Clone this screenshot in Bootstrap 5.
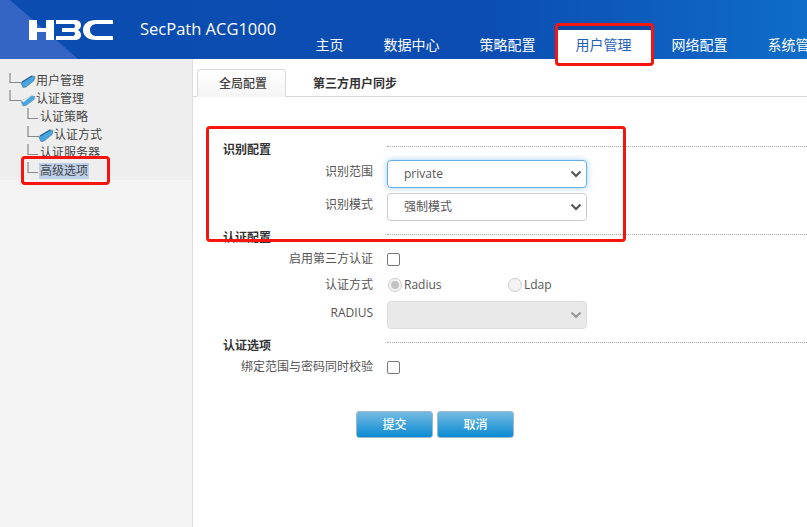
<!DOCTYPE html>
<html lang="zh">
<head>
<meta charset="utf-8">
<title>SecPath ACG1000</title>
<link href="https://cdn.jsdelivr.net/npm/bootstrap@5.3.0/dist/css/bootstrap.min.css" rel="stylesheet">
<style>
html,body{height:100%;overflow:hidden}
body{font-family:"Open Sans","Noto Sans CJK SC",sans-serif;font-size:12px;color:#444;background:#fff;position:relative}
.hdr{height:59px;background:linear-gradient(90deg,#0b4cb0 0%,#0b4db2 60%,#0f6cc8 100%);position:relative;overflow:hidden}
.hdr-tri{position:absolute;left:0;top:0}
.brand-wrap{position:relative;width:295.5px;flex:none;height:59px}
.h3c{position:absolute;left:28px;top:19px}
.prod{position:absolute;left:140px;top:17px;color:#fff;font-size:16.5px;line-height:24px;white-space:nowrap}
.topnav{flex-wrap:nowrap;height:59px;align-items:flex-end;position:relative}
.topnav .nav-link{color:#fff;font-size:14px;line-height:20px;padding:5px 20px 4px;white-space:nowrap;height:29px;border-radius:0}
.topnav .nav-link.active{background:#fff;color:#1f5fb8;border-top:4px solid #0d49a6;height:33px}
.sidebar{width:193px;flex:none;background:#f4f4f4;border-right:1px solid #dcdcdc;height:468px}
.tree-wrap{background:#eee;padding-top:13px;height:121px}
.tr-row{height:18px;display:flex;align-items:center;color:#444;font-size:12px;line-height:18px;white-space:nowrap}
.tr-row svg{flex:none}
.sel-item{background:#bdd0ea;padding:0 1px;line-height:16px}
.main-pane{flex:1;min-width:0}
.tabbar{height:38px;border-bottom:1px solid #d9d9d9;padding:10px 0 0 4px;flex-wrap:nowrap}
.tabbar .nav-link{font-size:12px;font-weight:500;color:#444;line-height:16px;border-radius:4px 4px 0 0}
.tabbar .nav-link.active{border:1px solid #d9d9d9;border-bottom-color:#f6f6f6;background:linear-gradient(180deg,#fff,#f5f5f5);color:#444;height:28px;padding:6px 18px 0 21px;margin-bottom:-1px}
.tabbar .nav-link.other{padding:7px 0 0 27px;font-weight:600;color:#333}
.frm{padding:44px 0 0 30px;width:614px}
.sect{display:flex;height:18px;line-height:18px}
.sect-t{font-weight:600;width:164px;flex:none;color:#333}
.sect-l{flex:1;border-top:1px dotted #aaa;margin-top:5px}
.frow{display:flex;align-items:center}
.flab{width:150px;flex:none;text-align:right;color:#555;line-height:18px}
.fctl{margin-left:14px;width:200px;flex:none}
.r-sel1{margin-top:-2px;height:34px}
.r-sel2{height:32px}
.r-chk1{height:24px}
.r-rad{height:27px}
.r-sel3{height:34px}
.r-chk2{height:24px}
.s-2{margin-top:6px}
.s-3{margin-top:5px}
.btn-row{margin:32px 0 0 133px}
.sel-x.form-select{height:28px;font-size:12px;padding:0 30px 0 16px;color:#555;border-color:#ccc;border-radius:4px;background-size:12px 10px;background-position:right 4px center;background-image:url("data:image/svg+xml,%3Csvg xmlns='http://www.w3.org/2000/svg' viewBox='0 0 12 10'%3E%3Cpath d='M1.5 2.5 6 7l4.5-4.5' fill='none' stroke='%23555' stroke-width='2.2'/%3E%3C/svg%3E");font-family:"Open Sans","Noto Sans CJK SC",sans-serif;box-shadow:none}
.sel-x.foc{border-color:#66afe9;box-shadow:0 0 6px rgba(102,175,233,.6)}
.sel-x.form-select:disabled{background-color:#e9e9e9;color:#777;border-color:#ddd;background-image:url("data:image/svg+xml,%3Csvg xmlns='http://www.w3.org/2000/svg' viewBox='0 0 12 10'%3E%3Cpath d='M1.5 2.5 6 7l4.5-4.5' fill='none' stroke='%23999' stroke-width='2.2'/%3E%3C/svg%3E")}
.chk.form-check-input{width:13px;height:13px;margin:0;border:1px solid #777;border-radius:2px;display:block}
.rad{width:14px;height:14px;border-radius:50%;border:1px solid #ccc;background:#f3f3f3;flex:none;display:inline-block;position:relative}
.rad.on::after{content:"";position:absolute;left:2px;top:2px;width:8px;height:8px;border-radius:50%;background:#c4c4c4}
.rad-item{display:flex;align-items:center;gap:2px;width:120px;flex:none;color:#555;padding-left:1px}
.act-btn.btn{width:77px;height:27px;padding:0;font-size:12px;color:#fff;font-weight:500;border:1px solid #9fb9cc;border-radius:3px;background:linear-gradient(180deg,#75bbe2 0%,#0a8ad3 100%)}
.mark-box{position:absolute;border:3px solid #f5150f;border-radius:4px;pointer-events:none}
</style>
</head>
<body>
<div class="hdr d-flex">
  <svg class="hdr-tri" width="78" height="59"><polygon points="0,0 10,0 78,59 0,59" fill="#3465c4"/></svg>
  <div class="brand-wrap">
    <svg class="h3c" width="86" height="22" viewBox="0 0 86 22" fill="#fff">
      <path d="M1 1h8v8h9V1h8v20h-8v-8H9v8H1z"/>
      <path d="M28 1h18c5 0 7 2 7 5 0 2-1 4-3 5 2 1 3 3 3 5 0 3-2 5-7 5H28v-4h17c1 0 2-1 2-2.500S46 13 45 13H34V9h11c1 0 2-.5 2-2s-1-2-2-2H28z"/>
      <path d="M85 1H68c-8 0-13 4-13 10s5 10 13 10h17v-4H69c-4 0-7-2-7-6s3-6 7-6h16z"/>
    </svg>
    <div class="prod">SecPath ACG1000</div>
  </div>
  <ul class="nav topnav">
    <li class="nav-item"><a class="nav-link" href="#">主页</a></li>
    <li class="nav-item"><a class="nav-link" href="#">数据中心</a></li>
    <li class="nav-item"><a class="nav-link" href="#">策略配置</a></li>
    <li class="nav-item"><a class="nav-link active" href="#">用户管理</a></li>
    <li class="nav-item"><a class="nav-link" href="#">网络配置</a></li>
    <li class="nav-item"><a class="nav-link" href="#">系统管理</a></li>
  </ul>
</div>
<div class="d-flex">
  <aside class="sidebar">
    <div class="tree-wrap">
      <div class="tr-row">
        <svg width="36" height="18"><path d="M10 1V10.500H21" stroke="#888" stroke-width="1.2" fill="none"/><path d="M21 11 32 4l3 .5-1 4-8 6.500-3 .5z" fill="#45a6e2" stroke="#55809c" stroke-width=".8"/><path d="M22 10 32 4" stroke="#1e5f90" stroke-width="1.2"/></svg>
        <span>用户管理</span>
      </div>
      <div class="tr-row">
        <svg width="36" height="18"><path d="M10 0V10.500H21" stroke="#888" stroke-width="1.2" fill="none"/><path d="M21 11 32 6l3 .5-1 3-8 6-3 .5z" fill="#45a6e2" stroke="#7a96a8" stroke-width=".8"/><path d="M21 11 31 6l-7 6z" fill="#f4f7f8"/></svg>
        <span>认证管理</span>
      </div>
      <div class="tr-row">
        <svg width="40" height="18"><path d="M28 0V10.500H38" stroke="#888" stroke-width="1.200" fill="none"/></svg>
        <span>认证策略</span>
      </div>
      <div class="tr-row">
        <svg width="54" height="18"><path d="M28 0V10.500H39" stroke="#888" stroke-width="1.200" fill="none"/><path d="M39 11 50 4l3 .5-1 4-8 6.500-3 .5z" fill="#45a6e2" stroke="#55809c" stroke-width=".8"/><path d="M40 10 50 4" stroke="#1e5f90" stroke-width="1.200"/></svg>
        <span>认证方式</span>
      </div>
      <div class="tr-row">
        <svg width="40" height="18"><path d="M28 0V10.500H38" stroke="#888" stroke-width="1.200" fill="none"/></svg>
        <span>认证服务器</span>
      </div>
      <div class="tr-row">
        <svg width="39" height="18"><path d="M28 0V10.500H38" stroke="#888" stroke-width="1.200" fill="none"/></svg>
        <span class="sel-item">高级选项</span>
      </div>
    </div>
  </aside>
  <main class="main-pane">
    <ul class="nav tabbar">
      <li class="nav-item"><a class="nav-link active" href="#">全局配置</a></li>
      <li class="nav-item"><a class="nav-link other" href="#">第三方用户同步</a></li>
    </ul>
    <form class="frm">
      <div class="sect"><div class="sect-t">识别配置</div><div class="sect-l"></div></div>
      <div class="frow r-sel1"><div class="flab mb-1">识别范围</div><div class="fctl"><select class="form-select sel-x foc"><option>private</option></select></div></div>
      <div class="frow r-sel2"><div class="flab mb-1">识别模式</div><div class="fctl"><select class="form-select sel-x"><option>强制模式</option></select></div></div>
      <div class="sect s-2"><div class="sect-t">认证配置</div><div class="sect-l"></div></div>
      <div class="frow r-chk1"><div class="flab">启用第三方认证</div><div class="fctl"><input class="form-check-input chk" type="checkbox"></div></div>
      <div class="frow r-rad"><div class="flab">认证方式</div><div class="fctl d-flex"><span class="rad-item"><span class="rad on"></span>Radius</span><span class="rad-item"><span class="rad"></span>Ldap</span></div></div>
      <div class="frow r-sel3"><div class="flab mb-1">RADIUS</div><div class="fctl"><select class="form-select sel-x" disabled><option></option></select></div></div>
      <div class="sect s-3"><div class="sect-t">认证选项</div><div class="sect-l"></div></div>
      <div class="frow r-chk2"><div class="flab">绑定范围与密码同时校验</div><div class="fctl"><input class="form-check-input chk" type="checkbox"></div></div>
      <div class="d-flex gap-1 btn-row">
        <button type="button" class="btn act-btn">提交</button>
        <button type="button" class="btn act-btn">取消</button>
      </div>
    </form>
  </main>
</div>
<div class="mark-box" style="left:555px;top:23px;width:99px;height:43px"></div>
<div class="mark-box" style="left:21px;top:156px;width:89px;height:29px"></div>
<div class="mark-box" style="left:206px;top:126px;width:420px;height:116px"></div>
<script src="https://cdn.jsdelivr.net/npm/bootstrap@5.3.0/dist/js/bootstrap.bundle.min.js"></script>
</body>
</html>
